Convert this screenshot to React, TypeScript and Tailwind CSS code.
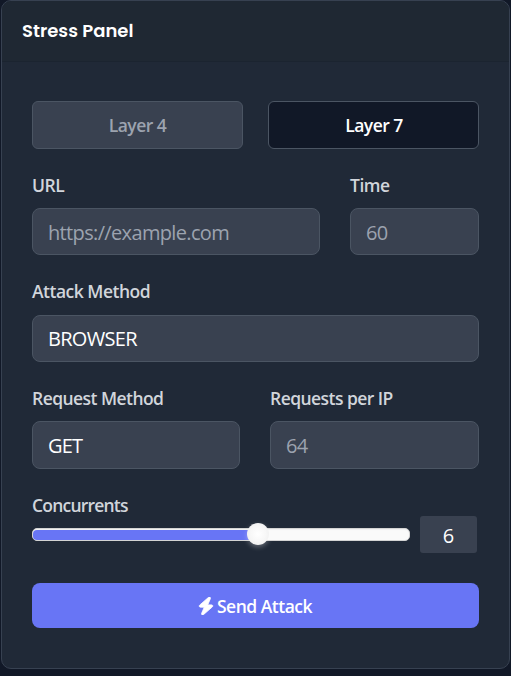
import type { ReactNode } from "react";
import { FaBolt } from "react-icons/fa6";

const fieldBase =
  "flex items-center rounded-lg border border-[#4b5563] bg-[#394150] px-[15px] text-[20px] leading-none";

function Label({ children, spacing }: { children: ReactNode; spacing: string }) {
  return (
    <div className={`h-[22px] whitespace-nowrap text-[17.5px] font-semibold leading-[21px] text-[#d1d5db] ${spacing}`}>
      {children}
    </div>
  );
}

export default function App() {
  return (
    <div className="h-[676px] w-[511px] bg-[#111827] pl-px font-['Open_Sans','Noto_Sans',sans-serif]">
      <div className="h-[669px] w-[509px] rounded-[10px] border border-[#374151] bg-[#202937]">
        <header className="flex h-[61px] items-center rounded-t-[9px] border-b border-[#1b2430] bg-[#1f2833] pb-[2px] pl-5">
          <h1 className="whitespace-nowrap font-['Poppins','Lato',sans-serif] text-[18px] font-semibold text-white">
            Stress Panel
          </h1>
        </header>

        <main className="px-[30px] pt-[39px]">
          <div className="grid grid-cols-2 gap-[25px] text-[17.5px] font-semibold tracking-[-0.55px]">
            <button className="h-12 rounded-md border border-[#4b5563] bg-[#394150] pt-px text-[#9ca3af]">Layer 4</button>
            <button className="h-12 rounded-md border border-[#4b5563] bg-[#111827] pl-px pt-px text-white">Layer 7</button>
          </div>

          <div className="mt-[26px] flex gap-[30px]">
            <div className="w-[288px]">
              <Label spacing="tracking-[-0.5px]">URL</Label>
              <div className={`mt-[11px] h-[47px] pt-[3px] tracking-[-0.65px] text-[#9ca3af] ${fieldBase}`}>https://example.com</div>
            </div>
            <div className="w-[129px]">
              <Label spacing="tracking-[-0.5px]">Time</Label>
              <div className={`mt-[11px] h-[47px] pt-[3px] tracking-[-0.65px] text-[#9ca3af] ${fieldBase}`}>60</div>
            </div>
          </div>

          <div className="mt-[26px]">
            <Label spacing="tracking-[-0.5px]">Attack Method</Label>
            <div className={`mt-3 h-[47px] tracking-[-0.7px] text-white ${fieldBase}`}>BROWSER</div>
          </div>

          <div className="mt-[26px] flex gap-[30px]">
            <div className="w-[208px]">
              <Label spacing="tracking-[-0.55px]">Request Method</Label>
              <div className={`mt-[11px] h-12 pt-[2px] tracking-[-0.8px] text-white ${fieldBase}`}>GET</div>
            </div>
            <div className="w-[209px]">
              <Label spacing="tracking-[-0.55px]">Requests per IP</Label>
              <div className={`mt-[11px] h-12 pt-[2px] tracking-[-0.65px] text-[#9ca3af] ${fieldBase}`}>64</div>
            </div>
          </div>

          <div className="mt-[26px] flex gap-[10px]">
            <div className="w-[378px]">
              <Label spacing="tracking-[-0.8px]">Concurrents</Label>
              <div className="mt-[11px] flex h-[13px] items-center rounded-[5px] border border-[#d3d3d3] bg-[#fafafa] shadow-[inset_0_1px_1px_#f0f0f0]">
                <div className="h-[10px] w-[226px] rounded-l-[4px] bg-[#6875f5]" />
                <div className="-ml-[12px] -mt-px size-[22px] shrink-0 rounded-full bg-[radial-gradient(circle,#ffffff_0%,#f7f7f7_50%,#ebebeb_100%)] shadow-[0_2px_5px_rgba(255,255,255,0.3)]" />
              </div>
            </div>
            <div className="mt-[21px] flex h-[37px] w-[57px] items-center justify-center rounded-[3px] bg-[#394150] pt-[2px] text-[20px] text-white">
              6
            </div>
          </div>

          <button className="mt-[30px] flex h-[45px] w-full items-center justify-center rounded-lg bg-[#6875f5] pr-px pt-px text-[17.5px] font-semibold tracking-[-0.5px] text-white">
            <FaBolt className="mr-[3px] h-[18px] w-4 stroke-current stroke-[24]" />
            <span>Send Attack</span>
          </button>
        </main>
      </div>
    </div>
  );
}
